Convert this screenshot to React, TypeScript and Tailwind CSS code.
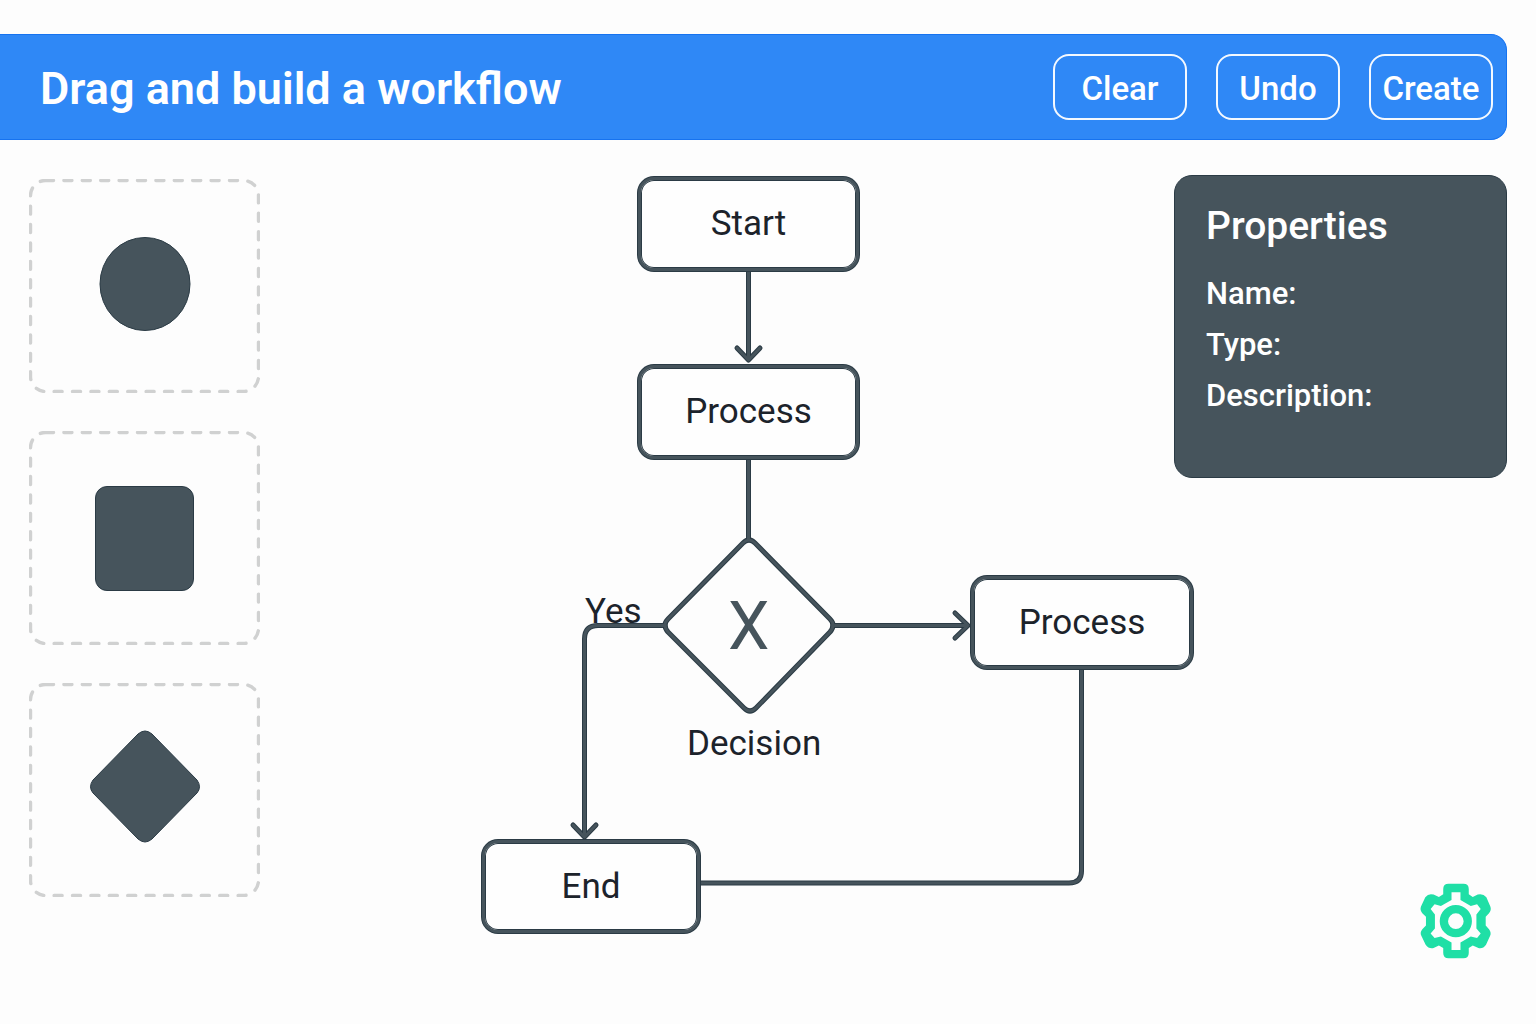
import type { ReactNode } from "react";

const OUTLINE = "#2b3b45";
const SLATE = "#46545c";

const connectors = [
  "M748.5 272V358",
  "M748.5 459V539",
  "M665 625.5H598Q584.5 625.5 584.5 639V834",
  "M833 625.5H966",
  "M1081.5 669V871Q1081.5 883 1069 883H700",
];

const arrowHeads = ["M737 348L748.5 360L760 348", "M573 825L584.5 837L596 825", "M955 613L968 625.5L955 638"];

const diamond =
  "M743 543Q749 537 755 543L830 619Q836 625 830 632L756 708Q750 714 744 708L668 632Q662 625 668 619Z";

function ToolbarButton({ children, wide = false }: { children: ReactNode; wide?: boolean }) {
  return (
    <button
      type="button"
      className={`h-[66px] rounded-2xl border-2 border-white/95 pt-1 text-center text-[33px] leading-10 font-medium ${
        wide ? "w-[134px]" : "w-[124px]"
      }`}
    >
      {children}
    </button>
  );
}

function PaletteItem({ label, children }: { label: string; children: ReactNode }) {
  return (
    <button
      type="button"
      aria-label={label}
      className="relative flex h-[214px] w-[231px] cursor-grab items-center justify-center"
    >
      <svg className="absolute inset-0 h-full w-full" viewBox="0 0 231 214" fill="none" aria-hidden="true">
        <rect
          x="1.5"
          y="1.5"
          width="228"
          height="211"
          rx="15"
          stroke="#d0d1d1"
          strokeWidth="3.4"
          strokeLinecap="round"
          strokeDasharray="8 10.4"
        />
      </svg>
      {children}
    </button>
  );
}

function Node({ children, className }: { children: ReactNode; className: string }) {
  return (
    <div
      className={`absolute flex items-center justify-center rounded-2xl border-[3px] border-[#46545c] bg-[#fefefe] text-[35px] leading-10 text-[#1c232b] shadow-[0_0_0_1px_#2b3b45,inset_0_0_0_1px_#2b3b45] ${className}`}
    >
      {children}
    </div>
  );
}

function Field({ id, label }: { id: string; label: string }) {
  return (
    <div className="flex h-[51px] items-center gap-2">
      <label htmlFor={id} className="shrink-0">
        {label}
      </label>
      <input id={id} type="text" className="min-w-0 flex-1 bg-transparent outline-none" />
    </div>
  );
}

function Gear() {
  return (
    <svg className="h-[76px] w-[73px]" viewBox="58 40 218 229" aria-hidden="true">
      <path
        fill="#1fdfa6"
        fillRule="evenodd"
        d="M130 58Q130 42 146 42H191Q207 42 207 58V74L219 82L234 75Q250 71 260 83L272 111Q276 122 268 131L258 142V168L268 179Q276 189 271 200L259 226Q250 239 236 236L219 228L207 236V251Q207 267 191 267H146Q130 267 130 251V236L117 228L101 236Q86 239 77 226L64 199Q59 189 67 179L78 168V142L67 131Q59 122 63 111L76 83Q86 70 101 75L117 82L130 74ZM155 68V91L123 109L104 104L92 118L105 135V177L92 192L104 206L123 201L155 219V242H182V219L213 201L232 206L243 192L230 177V135L243 118L232 104L213 109L182 91V68Z"
      />
      <circle cx="168" cy="155" r="36" fill="none" stroke="#1fdfa6" strokeWidth="25" />
    </svg>
  );
}

export default function App() {
  return (
    <div className="flex min-h-screen flex-col bg-[#fdfdfd] pt-[34px] font-['Roboto',sans-serif]">
      <header className="mr-[29px] flex h-[106px] items-center justify-between rounded-r-2xl border-y border-r border-[#1673f0] bg-[#2f88f6] pr-[13px] pl-10 text-white">
        <h1 className="pt-1 text-[45px] leading-[56px] font-semibold">Drag and build a workflow</h1>
        <div className="flex gap-[29px]">
          <ToolbarButton wide>Clear</ToolbarButton>
          <ToolbarButton>Undo</ToolbarButton>
          <ToolbarButton>Create</ToolbarButton>
        </div>
      </header>

      <main className="flex flex-1">
        <nav aria-label="Shapes" className="flex shrink-0 flex-col gap-[38px] pt-[39px] pl-[29px]">
          <PaletteItem label="Circle">
            <svg className="h-[98px] w-[92px]" viewBox="0 0 92 98">
              <ellipse cx="46" cy="47" rx="45" ry="46.5" fill={SLATE} stroke={OUTLINE} />
            </svg>
          </PaletteItem>
          <PaletteItem label="Square">
            <span className="h-[105px] w-[99px] rounded-xl border border-[#2b3b45] bg-[#46545c]" />
          </PaletteItem>
          <PaletteItem label="Diamond">
            <svg className="h-[120px] w-28" viewBox="0 0 112 120">
              <path
                d="M49 4Q56 -2 63 4L108 50Q113 57 108 63L63 109Q56 115 49 109L4 63Q-1 57 4 50Z"
                fill={SLATE}
                stroke={OUTLINE}
              />
            </svg>
          </PaletteItem>
        </nav>

        <section aria-label="Workflow canvas" className="relative min-w-0 flex-1">
          <svg
            className="absolute top-0 left-0 h-[800px] w-[940px] max-w-none"
            viewBox="260 140 940 800"
            fill="none"
            strokeLinecap="round"
            strokeLinejoin="round"
            aria-hidden="true"
          >
            {[
              { color: OUTLINE, width: 5 },
              { color: SLATE, width: 3 },
            ].map((pass) => (
              <g key={pass.color} stroke={pass.color} strokeWidth={pass.width}>
                {connectors.map((d) => (
                  <path key={d} d={d} />
                ))}
                {arrowHeads.map((d) => (
                  <path key={d} d={d} />
                ))}
                <path d={diamond} />
              </g>
            ))}
          </svg>
          <Node className="top-[37px] left-[378px] h-[94px] w-[221px]">Start</Node>
          <Node className="top-[225px] left-[378px] h-[94px] w-[221px]">Process</Node>
          <Node className="top-[436px] left-[711px] h-[93px] w-[222px]">Process</Node>
          <Node className="top-[700px] left-[222px] h-[93px] w-[218px]">End</Node>
          <span className="absolute top-[452px] left-[325px] text-[35px] leading-10 text-[#1c232b]">Yes</span>
          <span className="absolute top-[451px] left-[468px] text-[66px] leading-[72px] text-[#46545c]">X</span>
          <span className="absolute top-[584px] left-[427px] text-[35px] leading-10 text-[#1c232b]">Decision</span>
        </section>

        <aside className="z-10 mr-[29px] flex w-[333px] shrink-0 flex-col items-end justify-between pt-[35px] pb-[65px]">
          <section className="h-[303px] w-full rounded-[18px] border border-[#2b3b45] bg-[#46545c] px-[31px] pt-[26px] text-white">
            <h2 className="mb-[18px] text-[39px] leading-[48px] font-medium">Properties</h2>
            <div className="text-[31px] leading-10 font-medium">
              <Field id="name" label="Name:" />
              <Field id="type" label="Type:" />
              <Field id="description" label="Description:" />
            </div>
          </section>
          <button type="button" aria-label="Settings" className="mr-[15px]">
            <Gear />
          </button>
        </aside>
      </main>
    </div>
  );
}
